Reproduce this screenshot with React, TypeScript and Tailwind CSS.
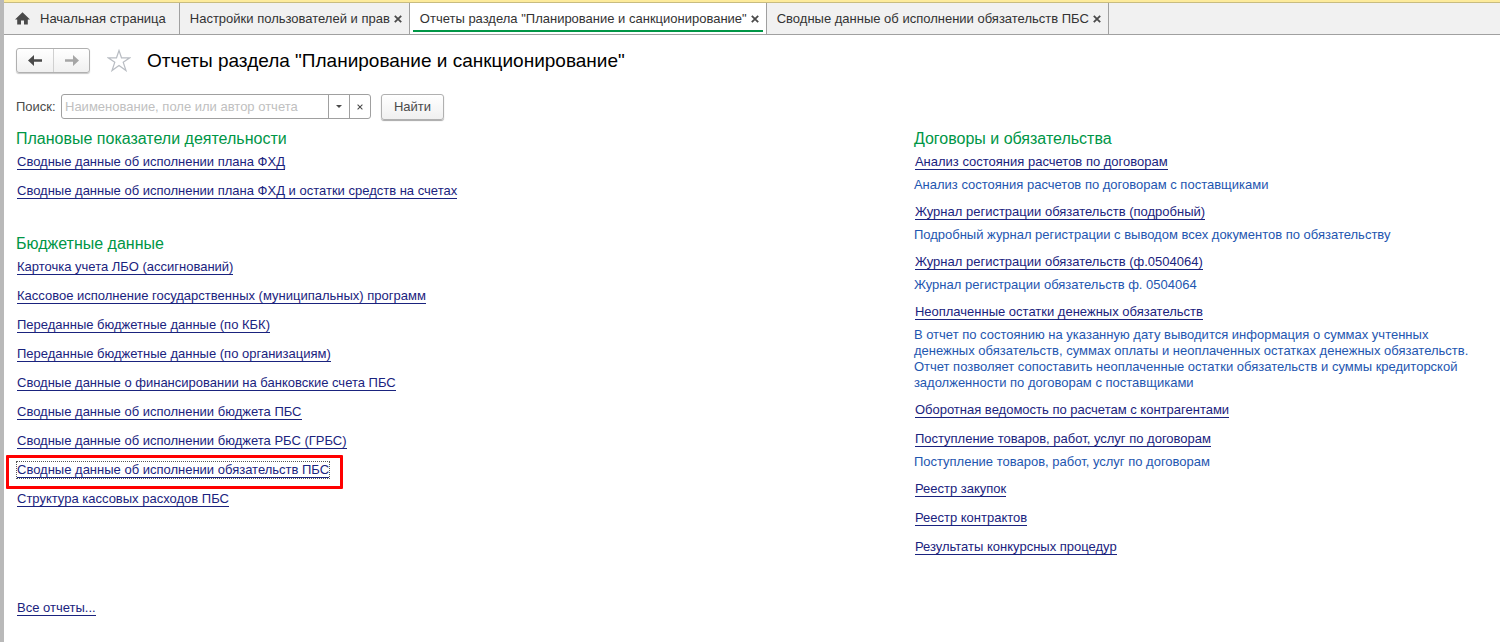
import clsx from 'clsx'

interface Report {
  title: string
  description?: string
  selected?: boolean
}

interface TabItem {
  title: string
  home?: boolean
  active?: boolean
}

const TABS: TabItem[] = [
  { title: 'Начальная страница', home: true },
  { title: 'Настройки пользователей и прав' },
  { title: 'Отчеты раздела "Планирование и санкционирование"', active: true },
  { title: 'Сводные данные об исполнении обязательств ПБС' },
]

const PLAN_REPORTS: Report[] = [
  { title: 'Сводные данные об исполнении плана ФХД' },
  { title: 'Сводные данные об исполнении плана ФХД и остатки средств на счетах' },
]

const BUDGET_REPORTS: Report[] = [
  { title: 'Карточка учета ЛБО (ассигнований)' },
  { title: 'Кассовое исполнение государственных (муниципальных) программ' },
  { title: 'Переданные бюджетные данные (по КБК)' },
  { title: 'Переданные бюджетные данные (по организациям)' },
  { title: 'Сводные данные о финансировании на банковские счета ПБС' },
  { title: 'Сводные данные об исполнении бюджета ПБС' },
  { title: 'Сводные данные об исполнении бюджета РБС (ГРБС)' },
  { title: 'Сводные данные об исполнении обязательств ПБС', selected: true },
  { title: 'Структура кассовых расходов ПБС' },
]

const CONTRACT_REPORTS: Report[] = [
  {
    title: 'Анализ состояния расчетов по договорам',
    description: 'Анализ состояния расчетов по договорам с поставщиками',
  },
  {
    title: 'Журнал регистрации обязательств (подробный)',
    description: 'Подробный журнал регистрации с выводом всех документов по обязательству',
  },
  {
    title: 'Журнал регистрации обязательств (ф.0504064)',
    description: 'Журнал регистрации обязательств ф. 0504064',
  },
  {
    title: 'Неоплаченные остатки денежных обязательств',
    description:
      'В отчет по состоянию на указанную дату выводится информация о суммах учтенных денежных обязательств, суммах оплаты и неоплаченных остатках денежных обязательств. Отчет позволяет сопоставить неоплаченные остатки обязательств и суммы кредиторской задолженности по договорам с поставщиками',
  },
  { title: 'Оборотная ведомость по расчетам с контрагентами' },
  {
    title: 'Поступление товаров, работ, услуг по договорам',
    description: 'Поступление товаров, работ, услуг по договорам',
  },
  { title: 'Реестр закупок' },
  { title: 'Реестр контрактов' },
  { title: 'Результаты конкурсных процедур' },
]

function HomeIcon() {
  return (
    <svg width="15" height="13" viewBox="0 0 15 13" fill="#4a4a4a" aria-hidden="true">
      <path d="M7.5 0.3 L15 7.4 H12.8 V12.5 H9 V8.5 H6 V12.5 H2.2 V7.4 H0 Z" />
    </svg>
  )
}

function CrossIcon({ size, strokeWidth }: { size: number; strokeWidth: number }) {
  return (
    <svg
      width={size}
      height={size}
      viewBox="0 0 8 8"
      stroke="#4a4a4a"
      strokeWidth={strokeWidth}
      aria-hidden="true"
    >
      <path d="M0.8 0.8 L7.2 7.2 M7.2 0.8 L0.8 7.2" />
    </svg>
  )
}

function ArrowIcon({ color, flip }: { color: string; flip?: boolean }) {
  return (
    <svg
      width="14"
      height="11"
      viewBox="0 0 14 11"
      className={clsx(flip && '-scale-x-100')}
      fill={color}
      aria-hidden="true"
    >
      <path d="M0 5.5 L6 0 V4.2 H14 V6.8 H6 V11 Z" />
    </svg>
  )
}

function StarIcon() {
  return (
    <svg width="24" height="23" viewBox="0 0 24 23" fill="none" stroke="#b9bdc3" aria-hidden="true">
      <path
        strokeWidth="1.2"
        d="M12 1.5 L14.5 8.8 H22.8 L16.2 13.3 L19 21.6 L12 16.6 L5 21.6 L7.8 13.3 L1.2 8.8 H9.5 Z"
      />
    </svg>
  )
}

function Tab({ title, home, active }: TabItem) {
  return (
    <div
      className={clsx(
        'flex h-[31px] items-stretch border-r border-[#a0a0a0] px-[3px]',
        active ? 'bg-white' : 'bg-[#f1f1f1]',
      )}
    >
      <div
        className={clsx(
          'mb-0.5 flex items-center border-b-2 pt-1',
          active ? 'border-[#009646]' : 'border-transparent',
          home ? 'gap-2.5 pr-2.5 pl-2' : 'gap-1 pr-1 pl-[7px]',
        )}
      >
        {home && <HomeIcon />}
        <button type="button" className="whitespace-nowrap text-[#333333]">
          {title}
        </button>
        {!home && (
          <button type="button" aria-label="Закрыть">
            <CrossIcon size={8} strokeWidth={1.8} />
          </button>
        )}
      </div>
    </div>
  )
}

function ReportLink({ title, selected }: Report) {
  return (
    <a
      href="#"
      className={clsx(
        'ml-px block w-fit border-b border-[#1a237e] leading-[15px] text-[#1a237e]',
        selected && 'relative outline-1 outline-[#555555] outline-dotted',
      )}
    >
      {title}
      {selected && (
        <span className="pointer-events-none absolute -top-[7px] -right-3.5 -bottom-[12px] -left-[11px] rounded-[1px] border-3 border-[#ff0000]" />
      )}
    </a>
  )
}

function ReportGroup({ heading, reports }: { heading: string; reports: Report[] }) {
  return (
    <section>
      <h2 className="mb-[5px] text-base leading-5 text-[#009646]">{heading}</h2>
      <ul>
        {reports.map((report) => (
          <li key={report.title} className={report.description ? 'mb-[11px]' : 'mb-[13px]'}>
            <ReportLink {...report} />
            {report.description && (
              <p className="mt-[7px] leading-4 text-[#1e56b0]">{report.description}</p>
            )}
          </li>
        ))}
      </ul>
    </section>
  )
}

export default function App() {
  return (
    <div className="min-h-screen border-l-4 border-[#b9b9b9] bg-white font-['Liberation_Sans',Arial,sans-serif] text-[13px]">
      <div className="h-[3px] border-b border-[#c8bc80] bg-[#fdeb9c]" />
      <nav className="flex border-b border-[#a0a0a0] bg-[#f1f1f1]">
        {TABS.map((tab) => (
          <Tab key={tab.title} {...tab} />
        ))}
      </nav>

      <main className="px-3 pt-3">
        <header className="flex h-[26px] items-center">
          <div className="flex h-[25px] rounded-[3px] border border-[#b0b0b0] bg-linear-to-b from-white to-[#f0f0f0] shadow-[0_1px_1px_#c8c8c8]">
            <button
              type="button"
              aria-label="Назад"
              className="flex w-[37px] items-center justify-center border-r border-[#d0d0d0]"
            >
              <ArrowIcon color="#4a4a4a" />
            </button>
            <button type="button" aria-label="Вперед" className="flex w-[35px] items-center justify-center">
              <ArrowIcon color="#a6a6a6" flip />
            </button>
          </div>
          <button type="button" aria-label="В избранное" className="ml-[17px]">
            <StarIcon />
          </button>
          <h1 className="ml-4 pt-0.5 text-[19px] leading-6 text-black">
            Отчеты раздела "Планирование и санкционирование"
          </h1>
        </header>

        <form className="mt-5 flex h-[27px] items-center" onSubmit={(e) => e.preventDefault()}>
          <label htmlFor="report-search" className="w-[45px] text-[#4a4a4a]">
            Поиск:
          </label>
          <div className="flex h-[25px] w-[310px] items-stretch rounded-[3px] border border-[#a0a0a0]">
            <input
              id="report-search"
              type="text"
              placeholder="Наименование, поле или автор отчета"
              className="min-w-0 flex-1 pl-[3px] outline-none placeholder:text-[#c0c0c0]"
            />
            <button
              type="button"
              aria-label="Показать список"
              className="flex w-[21px] items-center justify-center border-l border-[#a0a0a0]"
            >
              <svg width="6" height="3" viewBox="0 0 6 3" fill="#4a4a4a" aria-hidden="true">
                <path d="M0 0 H6 L3 3 Z" />
              </svg>
            </button>
            <button
              type="button"
              aria-label="Очистить"
              className="flex w-[21px] items-center justify-center border-l border-[#a0a0a0]"
            >
              <CrossIcon size={6} strokeWidth={1.4} />
            </button>
          </div>
          <button
            type="submit"
            className="ml-2.5 h-[26px] w-[63px] rounded-[3px] border border-[#b0b0b0] bg-linear-to-b from-white to-[#f0f0f0] text-[#4a4a4a] shadow-[0_1px_1px_#a8a8a8]"
          >
            Найти
          </button>
        </form>

        <div className="mt-[9px] grid grid-cols-[61.5%_1fr] pr-3">
          <div className="flex flex-col gap-[22px]">
            <ReportGroup heading="Плановые показатели деятельности" reports={PLAN_REPORTS} />
            <ReportGroup heading="Бюджетные данные" reports={BUDGET_REPORTS} />
          </div>
          <ReportGroup heading="Договоры и обязательства" reports={CONTRACT_REPORTS} />
        </div>

        <footer className="mt-8 pb-6">
          <ReportLink title="Все отчеты..." />
        </footer>
      </main>
    </div>
  )
}
